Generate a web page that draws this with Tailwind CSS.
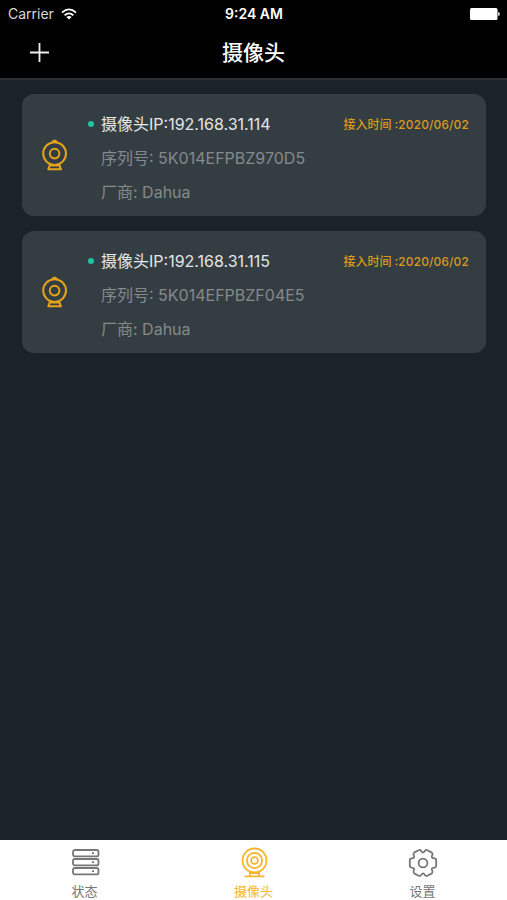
<!DOCTYPE html>
<html lang="zh-CN">
<head>
<meta charset="utf-8">
<meta name="viewport" content="width=device-width, initial-scale=1">
<title>摄像头</title>
<script src="https://cdn.jsdelivr.net/npm/@tailwindcss/browser@4"></script>
</head>
<body class="flex min-h-screen flex-col bg-[#1b2229] font-[Inter,'Noto_Sans_CJK_SC',sans-serif]">
<svg class="hidden" aria-hidden="true">
  <symbol id="camera" viewBox="0 0 26 32">
    <g fill="none" stroke="currentColor" stroke-width="2" stroke-linejoin="round" stroke-linecap="round">
      <circle cx="12.6" cy="14.6" r="11.4"/>
      <circle cx="12.6" cy="14.6" r="4.8"/>
      <path d="M8 25.4 6.6 29.8M17.2 25.4l1.4 4.4M8 26.4h9.2M6.2 30.2h12.8"/>
    </g>
    <path d="M9 3.6Q10.6 0.6 12.6 0.6T16.2 3.6Z" fill="currentColor"/>
  </symbol>
</svg>
<header class="border-b-2 border-[#2b3032] bg-black text-white">
  <div class="grid h-[27px] grid-cols-3 items-center pr-[7px] pl-2 text-sm">
    <div class="flex items-center gap-[7px] text-[#d8d8d8]">
      <span>Carrier</span>
      <svg class="h-3 w-4" viewBox="0 0 16 12" fill="none" stroke="#fff" stroke-width="1.8" aria-label="Wi-Fi">
        <path d="M1 4.6Q8-1.8 15 4.6M3.6 7.4Q8 3.4 12.4 7.4"/>
        <path d="M8 11.6 5.4 9Q8 6.9 10.6 9Z" fill="#fff" stroke="none"/>
      </svg>
    </div>
    <time class="text-center font-semibold whitespace-nowrap">9:24 AM</time>
    <svg class="h-3 w-[30px] justify-self-end" viewBox="0 0 30 12" fill="#fff" aria-label="电池">
      <rect width="27.5" height="12" rx="1.5"/>
      <path d="M28.2 4q1.6 0 1.6 2t-1.6 2z"/>
    </svg>
  </div>
  <div class="grid h-[51px] grid-cols-3 items-center">
    <button type="button" aria-label="添加" class="ml-[29px] size-5">
      <svg class="size-5" viewBox="0 0 20 20" stroke="#eee" stroke-width="1.8"><path d="M10.5 0v19M1 9.5h19"/></svg>
    </button>
    <h1 class="text-center text-[21px] font-medium whitespace-nowrap">摄像头</h1>
  </div>
</header>

<main class="flex-1 pt-[14px] pr-[21px] pb-4 pl-[22px]">
  <ul class="flex flex-col gap-[15px]">
    <li class="flex items-center rounded-xl bg-[#343d42] pr-[17px] pl-5">
      <svg class="h-8 w-[26px] shrink-0 text-[#e3a41b]"><use href="#camera"/></svg>
      <div class="ml-[33px] min-w-0 flex-1 pt-[13px] pb-[7px] text-base leading-[34px] text-[#858a8d]">
        <div class="flex items-center justify-between">
          <h2 class="relative text-[#e4e6e7]"><span class="absolute top-[14px] -left-[13px] size-[6px] rounded-full bg-[#22c3a0]"></span>摄像头IP:192.168.31.114</h2>
          <p class="pt-px text-xs leading-[33px] font-medium text-[#d99b1c] tabular-nums">接入时间 :2020/06/02</p>
        </div>
        <p>序列号: 5K014EFPBZ970D5</p>
        <p>厂商: Dahua</p>
      </div>
    </li>
    <li class="flex items-center rounded-xl bg-[#343d42] pr-[17px] pl-5">
      <svg class="h-8 w-[26px] shrink-0 text-[#e3a41b]"><use href="#camera"/></svg>
      <div class="ml-[33px] min-w-0 flex-1 pt-[13px] pb-[7px] text-base leading-[34px] text-[#858a8d]">
        <div class="flex items-center justify-between">
          <h2 class="relative text-[#e4e6e7]"><span class="absolute top-[14px] -left-[13px] size-[6px] rounded-full bg-[#22c3a0]"></span>摄像头IP:192.168.31.115</h2>
          <p class="pt-px text-xs leading-[33px] font-medium text-[#d99b1c] tabular-nums">接入时间 :2020/06/02</p>
        </div>
        <p>序列号: 5K014EFPBZF04E5</p>
        <p>厂商: Dahua</p>
      </div>
    </li>
  </ul>
</main>

<nav class="grid h-[60px] grid-cols-3 bg-white text-[13px] leading-5 text-[#777]">
  <a href="#" class="flex flex-col items-center gap-[2px] pt-[7px]">
    <svg class="h-8 w-[30px]" viewBox="0 0 30 32" fill="none" stroke="currentColor" stroke-width="1.8">
      <rect x="3" y="3" width="25.5" height="6.4" rx="2"/>
      <rect x="3" y="12" width="25.5" height="6.4" rx="2"/>
      <rect x="3" y="21" width="25.5" height="6.4" rx="2"/>
      <path d="M22 6.2h2M22 15.2h2M22 24.2h2"/>
    </svg>
    <span>状态</span>
  </a>
  <a href="#" aria-current="page" class="flex flex-col items-center gap-[2px] pt-[7px] text-[#f9b42c]">
    <svg class="h-8 w-[30px]" viewBox="0 0 30 32" fill="none" stroke="currentColor" stroke-width="1.8">
      <circle cx="15.5" cy="13.5" r="12"/>
      <circle cx="15.5" cy="13.5" r="7.6"/>
      <circle cx="15.5" cy="13.5" r="3.4"/>
      <path d="M10.9 24.4v5M20.1 24.4v5M5.5 29.4h20M10.9 26h9.2"/>
    </svg>
    <span>摄像头</span>
  </a>
  <a href="#" class="flex flex-col items-center gap-[2px] pt-[7px]">
    <svg class="h-8 w-[30px]" viewBox="-15 -16 30 32" fill="none" stroke="currentColor" stroke-width="1.8">
      <path d="M13.2-2.6V2.6Q13.2 4.4 11.4 4.6Q7.6 4.8 9.3 7.7Q10.1 9.4 8.9 10.4L4.4 12.8Q3 13.6 1.8 12Q0 8.8-1.8 12Q-3 13.6-4.4 12.8L-8.9 10.4Q-10.1 9.4-9.3 7.7Q-7.6 4.8-11.4 4.6Q-13.2 4.4-13.2 2.6V-2.6Q-13.2-4.4-11.4-4.6Q-7.6-4.8-9.3-7.7Q-10.1-9.4-8.9-10.4L-4.4-12.8Q-3-13.6-1.8-12Q0-8.8 1.8-12Q3-13.6 4.4-12.8L8.9-10.4Q10.1-9.4 9.3-7.7Q7.6-4.8 11.4-4.6Q13.2-4.4 13.2-2.6Z"/>
      <circle r="4.4"/>
    </svg>
    <span>设置</span>
  </a>
</nav>
</body>
</html>
